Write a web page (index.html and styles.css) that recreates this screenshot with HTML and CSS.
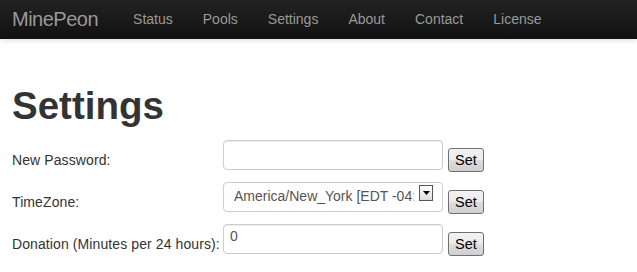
FILE: index.html
```html
<!DOCTYPE html>
<html lang="en">
<head>
  <meta charset="UTF-8">
  <meta name="viewport" content="width=device-width, initial-scale=1.0">
  <title>MinePeon - Settings</title>
  <link rel="stylesheet" href="styles.css">
</head>
<body>
  <div class="navbar">
    <a class="brand" href="#">MinePeon</a>
    <ul class="nav">
      <li><a href="#">Status</a></li>
      <li><a href="#">Pools</a></li>
      <li><a href="#">Settings</a></li>
      <li><a href="#">About</a></li>
      <li><a href="#">Contact</a></li>
      <li><a href="#">License</a></li>
    </ul>
  </div>

  <div class="container">
    <h1>Settings</h1>
    <form class="settings-form">
      <label for="password">New Password:</label>
      <input type="password" id="password">
      <button type="button" class="set-btn">Set</button>

      <label for="timezone">TimeZone:</label>
      <div class="select-wrap">
        <select id="timezone">
          <option>America/New_York [EDT -04:00]</option>
        </select>
        <span class="select-arrow">
          <svg width="7" height="4" viewBox="0 0 7 4"><path d="M0 0h7L3.5 4z" fill="#000"/></svg>
        </span>
      </div>
      <button type="button" class="set-btn">Set</button>

      <label for="donation">Donation (Minutes per 24 hours):</label>
      <input type="text" id="donation" value="0">
      <button type="button" class="set-btn">Set</button>
    </form>
  </div>
</body>
</html>
```

FILE: styles.css
```css
body {
  margin: 0;
  font-family: "Liberation Sans", Arial, sans-serif;
  font-size: 14px;
  line-height: 20px;
  color: #333;
  background: #fff;
}

.navbar {
  display: flex;
  align-items: center;
  height: 39px;
  background: linear-gradient(#222, #111);
  box-shadow: 0 1px 6px rgba(0, 0, 0, 0.15);
}

.brand {
  padding: 9px 20px 10px 12px;
  font-size: 20px;
  line-height: 20px;
  letter-spacing: -0.5px;
  color: #999;
  text-decoration: none;
}

.nav {
  display: flex;
  list-style: none;
  margin: 0;
  padding: 0;
}

.nav a {
  display: block;
  padding: 9px 15px 10px;
  color: #999;
  text-decoration: none;
}

.container {
  padding: 47px 12px 0;
}

h1 {
  margin: 0 0 14px;
  font-size: 38.5px;
  line-height: 40px;
  font-weight: bold;
}

.settings-form {
  display: grid;
  grid-template-columns: 211px 225px auto;
  grid-auto-rows: 40px;
  row-gap: 2px;
  align-items: center;
}

.settings-form label {
  align-self: center;
  letter-spacing: 0.1px;
}

.settings-form input,
.select-wrap {
  align-self: start;
  box-sizing: border-box;
  width: 220px;
  height: 30px;
}

.settings-form input {
  padding: 4px 6px;
  border: 1px solid #ccc;
  border-radius: 4px;
  font-family: inherit;
  font-size: 14px;
  color: #555;
  box-shadow: inset 0 1px 1px rgba(0, 0, 0, 0.075);
}

#donation {
  padding-top: 1px;
  padding-bottom: 7px;
}

.select-wrap {
  position: relative;
}

.select-wrap select {
  -webkit-appearance: none;
  appearance: none;
  width: 100%;
  height: 100%;
  padding: 2px 28px 4px 10px;
  border: 1px solid #ccc;
  border-radius: 4px;
  background: #fff;
  font-family: inherit;
  font-size: 14px;
  color: #555;
}

.select-arrow {
  position: absolute;
  top: 3px;
  right: 10px;
  width: 14px;
  height: 16px;
  display: flex;
  align-items: center;
  justify-content: center;
  border: 1px solid #555;
  background: linear-gradient(#fff, #ddd);
  box-sizing: border-box;
}

.set-btn {
  justify-self: start;
  height: 24px;
  padding: 0 6px;
  border: 1px solid #707070;
  border-radius: 3px;
  background: linear-gradient(#f2f2f2 0%, #ebebeb 50%, #dddddd 51%, #cfcfcf 100%);
  font-family: inherit;
  font-size: 14.5px;
  color: #000;
}
```
